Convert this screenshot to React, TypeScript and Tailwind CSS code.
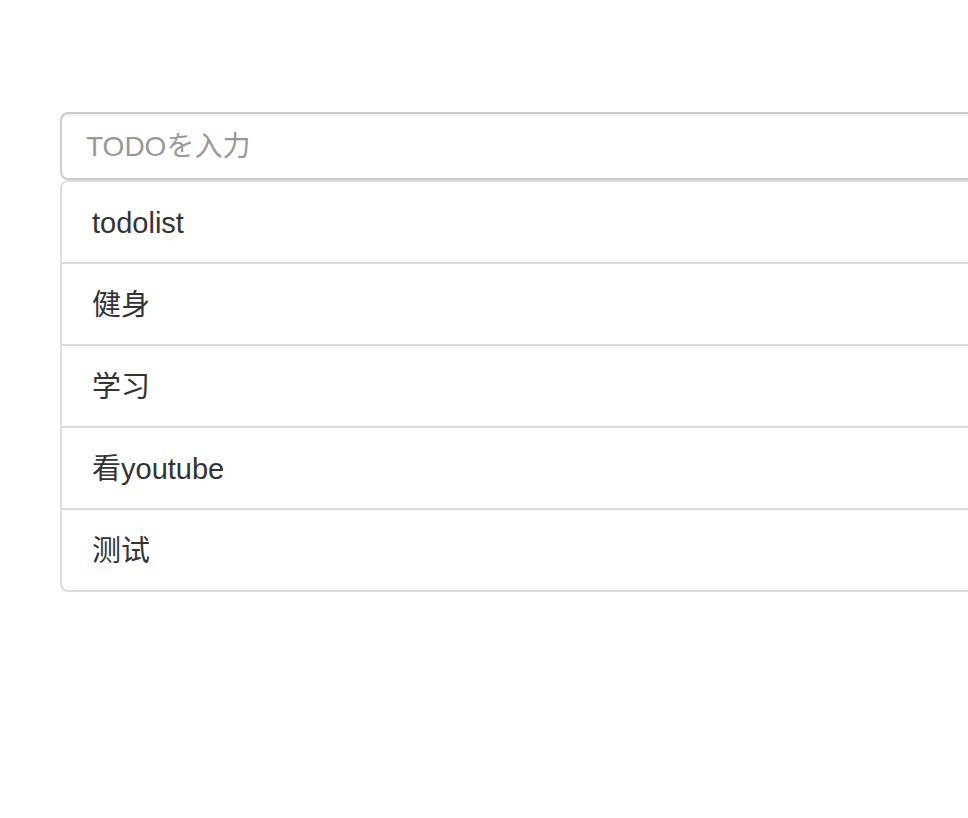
import { useState } from 'react';

const todos = ['todolist', '健身', '学习', '看youtube', '测试'];

export default function App() {
    const [text, setText] = useState('');

    return (
        <div className="h-screen w-screen overflow-hidden bg-white text-[#333] font-['Liberation_Sans','Noto_Sans_CJK_SC',sans-serif]">
            <div className="w-[1400px] pl-[60px] pt-[112px]">
                <input
                    type="text"
                    value={text}
                    onChange={(e) => setText(e.target.value)}
                    placeholder="TODOを入力"
                    className="block w-full h-[68px] px-[24px] pt-[13px] pb-[11px] text-[28px] leading-[40px] text-[#555] placeholder:text-[#999] bg-white border-2 border-[#ccc] rounded-[8px] shadow-[inset_0_2px_2px_rgba(0,0,0,0.075)] outline-none"
                />
                <ul className="mb-[40px]">
                    {todos.map((todo, i) => (
                        <li
                            key={todo}
                            className={`block px-[30px] pt-[21px] pb-[19px] text-[29px] leading-[40px] bg-white border-2 border-[#ddd] ${i > 0 ? '-mt-[2px]' : 'rounded-t-[8px]'} ${i === todos.length - 1 ? 'rounded-b-[8px]' : ''}`}
                        >
                            {todo}
                        </li>
                    ))}
                </ul>
            </div>
        </div>
    );
}
